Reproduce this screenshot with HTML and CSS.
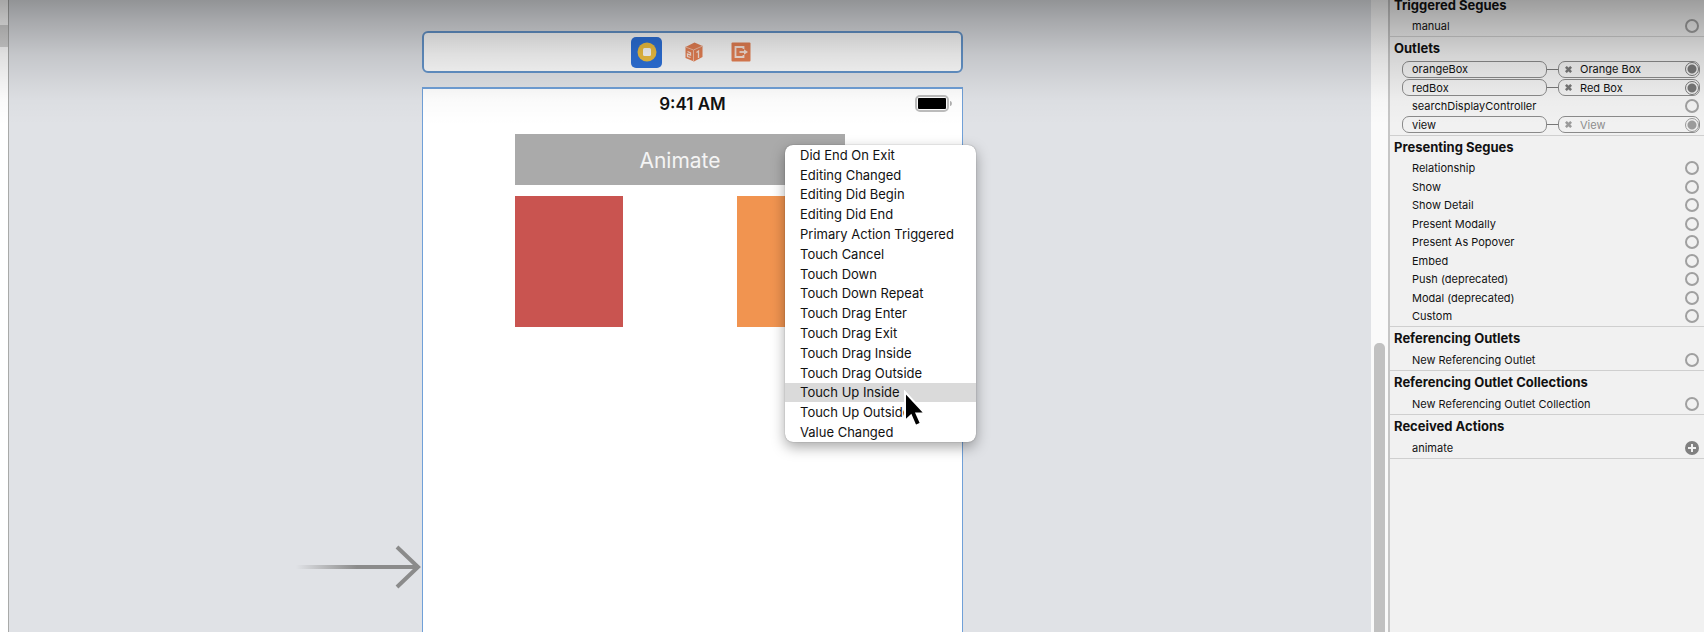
FILE: index.html
```html
<!DOCTYPE html>
<html lang="en">
<head>
<meta charset="utf-8">
<title>Main.storyboard</title>
<link rel="stylesheet" href="styles.css">
</head>
<body>
<div class="workspace">
  <aside class="outline"><div class="outline-selected"></div></aside>

  <main class="canvas">
    <div class="scene">
      <div class="dock">
        <button class="dock-item selected" aria-label="View Controller">
          <svg width="20" height="20" viewBox="0 0 20 20"><circle cx="10" cy="10" r="9.5" fill="#f3c341"/><rect x="6" y="6" width="8" height="8" rx="1.5" fill="#fff"/></svg>
        </button>
        <button class="dock-item" aria-label="First Responder">
          <svg width="20" height="20" viewBox="0 0 20 20"><path d="M10.500.500 18.500 4v11L10 19.500 1.500 16V5z" fill="#e98255"/><path d="M1.500 5 9.500 8 18.500 4M9.500 8v11.500" fill="none" stroke="#f5c3ab" stroke-width="1"/><path d="M12.500 10.500 14.500 9v7M3.500 9.500 6.500 11v2l-3-1v2.500l3 1" fill="none" stroke="#fbe6dc" stroke-width="1.300"/></svg>
        </button>
        <button class="dock-item" aria-label="Exit">
          <svg width="20" height="20" viewBox="0 0 20 20"><rect x=".5" y=".5" width="19" height="19" rx="1" fill="#e98255"/><path d="M12.500 7V5H4.500v10h8v-2" fill="none" stroke="#fbe6dc" stroke-width="1.800"/><path d="M8.500 10h5" stroke="#fbe6dc" stroke-width="1.800"/><path d="M13 7.200 17 10l-4 2.800z" fill="#fbe6dc"/></svg>
        </button>
      </div>

      <div class="device">
        <div class="status-bar">
          <span class="time">9:41 AM</span>
          <svg class="battery" width="38" height="17" viewBox="0 0 38 17"><rect x="1" y="1" width="32" height="15" rx="4" fill="#fff" stroke="#bdbdbd" stroke-width="2"/><rect x="3" y="3" width="28" height="11" rx="1" fill="#000"/><path d="M35 6c2.500 0 2.500 5 0 5z" fill="#b0b0b0"/></svg>
        </div>
        <div class="view">
          <button class="animate">Animate</button>
          <div class="boxes"><div class="box red"></div><div class="box orange"></div></div>
        </div>

        <svg class="entry-arrow" width="128" height="48" viewBox="0 0 128 48">
          <defs><linearGradient id="fade" x1="0" x2="1" y1="0" y2="0"><stop offset="0" stop-color="#8b8b8b" stop-opacity="0"/><stop offset=".5" stop-color="#8b8b8b"/></linearGradient></defs>
          <rect x="1" y="22" width="122" height="4" fill="url(#fade)"/>
          <path d="M102 4 123 24 102 44" fill="none" stroke="#8b8b8b" stroke-width="4"/>
        </svg>

        <div class="menu" role="menu">
          <button role="menuitem">Did End On Exit</button>
          <button role="menuitem">Editing Changed</button>
          <button role="menuitem">Editing Did Begin</button>
          <button role="menuitem">Editing Did End</button>
          <button role="menuitem">Primary Action Triggered</button>
          <button role="menuitem">Touch Cancel</button>
          <button role="menuitem">Touch Down</button>
          <button role="menuitem">Touch Down Repeat</button>
          <button role="menuitem">Touch Drag Enter</button>
          <button role="menuitem">Touch Drag Exit</button>
          <button role="menuitem">Touch Drag Inside</button>
          <button role="menuitem">Touch Drag Outside</button>
          <button role="menuitem" class="active">Touch Up Inside</button>
          <button role="menuitem">Touch Up Outside</button>
          <button role="menuitem">Value Changed</button>
          <svg class="pointer" width="24" height="38" viewBox="0 0 24 38"><path d="M2 2v29l6-5.500L12.500 36l5.500-2.500L13.500 23.500H22z" fill="#000" stroke="#fff" stroke-width="2"/></svg>
        </div>
      </div>
    </div>
  </main>

  <div class="scroller"><div class="thumb"></div></div>

  <aside class="inspector">
    <section>
      <h2>Triggered Segues</h2>
      <ul><li><span class="name">manual</span><button class="well" aria-label="Connect manual"></button></li></ul>
    </section>
    <section>
      <h2>Outlets</h2>
      <ul>
        <li class="linked"><span class="pill">orangeBox</span><span class="wire"></span><span class="pill target"><button class="remove" aria-label="Disconnect orangeBox"><svg width="7" height="7" viewBox="0 0 8 8"><path d="M1 1 7 7M7 1 1 7"/></svg></button>Orange Box<button class="well on" aria-label="Connect orangeBox"></button></span></li>
        <li class="linked"><span class="pill">redBox</span><span class="wire"></span><span class="pill target"><button class="remove" aria-label="Disconnect redBox"><svg width="7" height="7" viewBox="0 0 8 8"><path d="M1 1 7 7M7 1 1 7"/></svg></button>Red Box<button class="well on" aria-label="Connect redBox"></button></span></li>
        <li><span class="name">searchDisplayController</span><button class="well" aria-label="Connect searchDisplayController"></button></li>
        <li class="linked"><span class="pill">view</span><span class="wire"></span><span class="pill target dim"><button class="remove" aria-label="Disconnect view"><svg width="7" height="7" viewBox="0 0 8 8"><path d="M1 1 7 7M7 1 1 7"/></svg></button>View<button class="well on" aria-label="Connect view"></button></span></li>
      </ul>
    </section>
    <section>
      <h2>Presenting Segues</h2>
      <ul>
        <li><span class="name">Relationship</span><button class="well" aria-label="Connect Relationship"></button></li>
        <li><span class="name">Show</span><button class="well" aria-label="Connect Show"></button></li>
        <li><span class="name">Show Detail</span><button class="well" aria-label="Connect Show Detail"></button></li>
        <li><span class="name">Present Modally</span><button class="well" aria-label="Connect Present Modally"></button></li>
        <li><span class="name">Present As Popover</span><button class="well" aria-label="Connect Present As Popover"></button></li>
        <li><span class="name">Embed</span><button class="well" aria-label="Connect Embed"></button></li>
        <li><span class="name">Push (deprecated)</span><button class="well" aria-label="Connect Push"></button></li>
        <li><span class="name">Modal (deprecated)</span><button class="well" aria-label="Connect Modal"></button></li>
        <li><span class="name">Custom</span><button class="well" aria-label="Connect Custom"></button></li>
      </ul>
    </section>
    <section>
      <h2>Referencing Outlets</h2>
      <ul><li><span class="name">New Referencing Outlet</span><button class="well" aria-label="Connect New Referencing Outlet"></button></li></ul>
    </section>
    <section>
      <h2>Referencing Outlet Collections</h2>
      <ul><li><span class="name">New Referencing Outlet Collection</span><button class="well" aria-label="Connect New Referencing Outlet Collection"></button></li></ul>
    </section>
    <section>
      <h2>Received Actions</h2>
      <ul><li><span class="name">animate</span><button class="well add" aria-label="Connect animate"><svg width="14" height="14" viewBox="0 0 14 14"><circle cx="7" cy="7" r="7" fill="#808080"/><path d="M7 3v8M3 7h8" stroke="#f1f1f1" stroke-width="2"/></svg></button></li></ul>
    </section>
  </aside>
  <div class="shade"></div>
</div>
</body>
</html>
```
FILE: styles.css
```css
* { box-sizing: border-box; }
body { margin: 0; font-family: Inter, "Liberation Sans", sans-serif; color: #111; }
button { font: inherit; color: inherit; border: 0; padding: 0; margin: 0; background: none; }
svg { display: block; }

.workspace {
  position: relative;
  display: grid;
  grid-template-columns: 9px 1fr 17px 316px;
  height: 100vh;
  overflow: hidden;
}
.shade {
  position: absolute;
  inset: 0 0 auto;
  height: 125px;
  pointer-events: none;
  background: linear-gradient(rgba(0,0,0,.35), rgba(0,0,0,.26) 16%, rgba(0,0,0,.12) 44%, rgba(0,0,0,.05) 68%, rgba(0,0,0,.02) 80%, rgba(0,0,0,0));
}

.outline { padding-top: 25px; background: #fff; border-right: 1px solid #a9aaa9; }
.outline-selected { height: 22px; background: #d6d6d6; }

.canvas { display: flex; justify-content: center; background: #e0e2e6; padding: 31px 0 0 5px; min-width: 0; }
.scene { display: flex; flex-direction: column; gap: 14px; width: 541px; }
.dock {
  display: flex; align-items: center; justify-content: center; gap: 16px;
  height: 42px;
  background: #fff;
  border: 2px solid #6595cb; border-radius: 6px;
  padding-left: 2px;
}
.dock-item { display: grid; place-items: center; width: 31px; height: 31px; border-radius: 5px; }
.dock-item.selected { background: #2d72dc; }

.device { position: relative; flex: 1; background: #fff; border: solid #70a0d8; border-width: 2px 1px 0; }
.status-bar { display: grid; grid-template-columns: 1fr auto 1fr; align-items: center; height: 29px; padding: 0 9px; }
.time { grid-column: 2; font-size: 17px; font-weight: 600; }
.battery { justify-self: end; }
.view { display: flex; flex-direction: column; gap: 11px; padding: 16px 117px 0 92px; }
.animate { height: 51px; padding-top: 1px; background: #aaa; color: #f4f4f4; font-size: 21px; }
.boxes { display: flex; justify-content: space-between; }
.box { width: 108px; height: 131px; }
.red { background: #c95450; }
.orange { background: #f19450; }
.entry-arrow { position: absolute; right: 100%; top: 454px; }

.menu {
  position: absolute; left: 362px; top: 56px;
  display: grid; grid-auto-rows: 1fr;
  width: 191px; height: 297px;
  background: #fff; border-radius: 8px;
  box-shadow: 0 0 1px rgba(0,0,0,.5), 0 5px 14px rgba(0,0,0,.35);
  font-size: 13px;
}
.menu button { text-align: left; padding-left: 15px; white-space: nowrap; }
.menu .active { background: #dadada; }
.pointer { position: absolute; left: 118px; top: 245px; }

.scroller { background: #fafafa; padding: 343px 3px 0; }
.thumb { height: 100%; background: #c1c1c1; border-radius: 5px 5px 0 0; }

.inspector { background: #f1f1f1; border-left: 2px solid #c6c6c6; overflow: hidden; font-size: 11px; }
.inspector section { border-bottom: 1px solid #cfcfcf; padding-bottom: 1px; }
.inspector section:first-child { margin-top: -6px; }
.inspector h2 { margin: 0; padding-left: 4px; font-size: 13px; font-weight: 700; line-height: 23px; }
.inspector ul { list-style: none; margin: 0; padding: 0; }
.inspector li { display: flex; align-items: center; height: 18px; padding: 0 5px 0 22px; }
.inspector li:nth-child(even), .inspector section:nth-child(n+4) li { height: 19px; }
.inspector li.linked { padding: 0 4px 0 12px; }
.name { flex: 1; }
.pill {
  flex: 1 1 0; display: flex; align-items: center;
  height: 17px; padding: 0 0 0 9px;
  border: 1px solid #8a8a8a; border-radius: 7px;
}
.wire { width: 11px; height: 1px; background: #777; }
.target { padding: 0 0 0 6px; }
.remove { margin-right: 8px; }
.remove path { fill: none; stroke: #777; stroke-width: 3; }
.dim { color: #8d8d8d; }
.dim .remove, .dim .well { opacity: .7; }
.well { flex: none; width: 14px; height: 14px; border: 2px solid #a0a0a0; border-radius: 50%; margin-left: auto; }
.well.on { border: 1px solid #777; background: radial-gradient(circle, #777 0 4px, transparent 5px); }
.well.add { border: 0; }
```
